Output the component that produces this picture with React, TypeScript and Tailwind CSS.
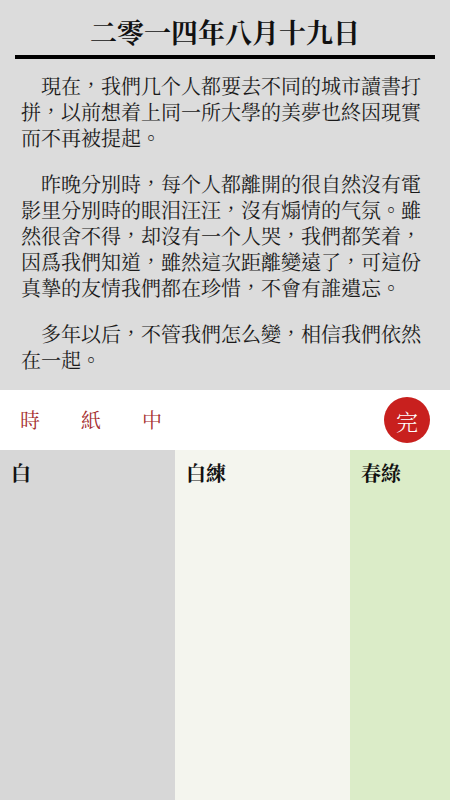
const PARAGRAPHS: string[][] = [
  [
    '\u3000現在，我們几个人都要去不同的城市讀書打',
    '拼，以前想着上同一所大學的美夢也終因現實',
    '而不再被提起。',
  ],
  [
    '\u3000昨晚分別時，每个人都離開的很自然沒有電',
    '影里分別時的眼泪汪汪，沒有煽情的气氛。雖',
    '然很舍不得，却沒有一个人哭，我們都笑着，',
    '因爲我們知道，雖然這次距離變遠了，可這份',
    '真摯的友情我們都在珍惜，不會有誰遺忘。',
  ],
  ['\u3000多年以后，不管我們怎么變，相信我們依然', '在一起。'],
];

const PAPERS = [
  { name: '白', bg: 'bg-[#d7d7d7]', width: 'w-[175px]' },
  { name: '白練', bg: 'bg-[#f4f5ee]', width: 'w-[175px]' },
  { name: '春綠', bg: 'bg-[#dbecc8]', width: 'flex-1' },
];

const FONT = '[font-family:"Noto_Serif_CJK_TC","Noto_Sans_CJK_TC",serif]';

export default function App() {
  return (
    <div className={`w-[450px] h-[800px] flex flex-col overflow-hidden ${FONT}`}>
      <div className="h-[390px] bg-[#dcdcdc] flex flex-col px-[15px]">
        <h1 className="text-center text-[27px] leading-none font-bold text-[#111] pt-[18px]">
          二零一四年八月十九日
        </h1>
        <div className="h-[4px] bg-black mt-[10px]" />
        <div className="px-[6px] pt-[14px] flex flex-col gap-[20px] text-[20px] leading-[26px] text-[#1a1a1a]">
          {PARAGRAPHS.map((p, i) => (
            <div key={i}>
              {p.map((line, j) => (
                <div key={j} className="whitespace-nowrap">
                  {line}
                </div>
              ))}
            </div>
          ))}
        </div>
      </div>

      <div className="h-[60px] bg-white flex items-center px-[20px]">
        <div className="flex gap-[41px] text-[20px] text-[#a52d2d]">
          <span>時</span>
          <span>紙</span>
          <span>中</span>
        </div>
        <div className="ml-auto w-[46px] h-[46px] rounded-full bg-[#c8201e] flex items-center justify-center text-white text-[22px] font-light">
          完
        </div>
      </div>

      <div className="flex-1 flex">
        {PAPERS.map((p) => (
          <div key={p.name} className={`${p.width} ${p.bg} px-[11px] pt-[8px]`}>
            <span className="text-[20px] font-bold text-[#111]">{p.name}</span>
          </div>
        ))}
      </div>
    </div>
  );
}
